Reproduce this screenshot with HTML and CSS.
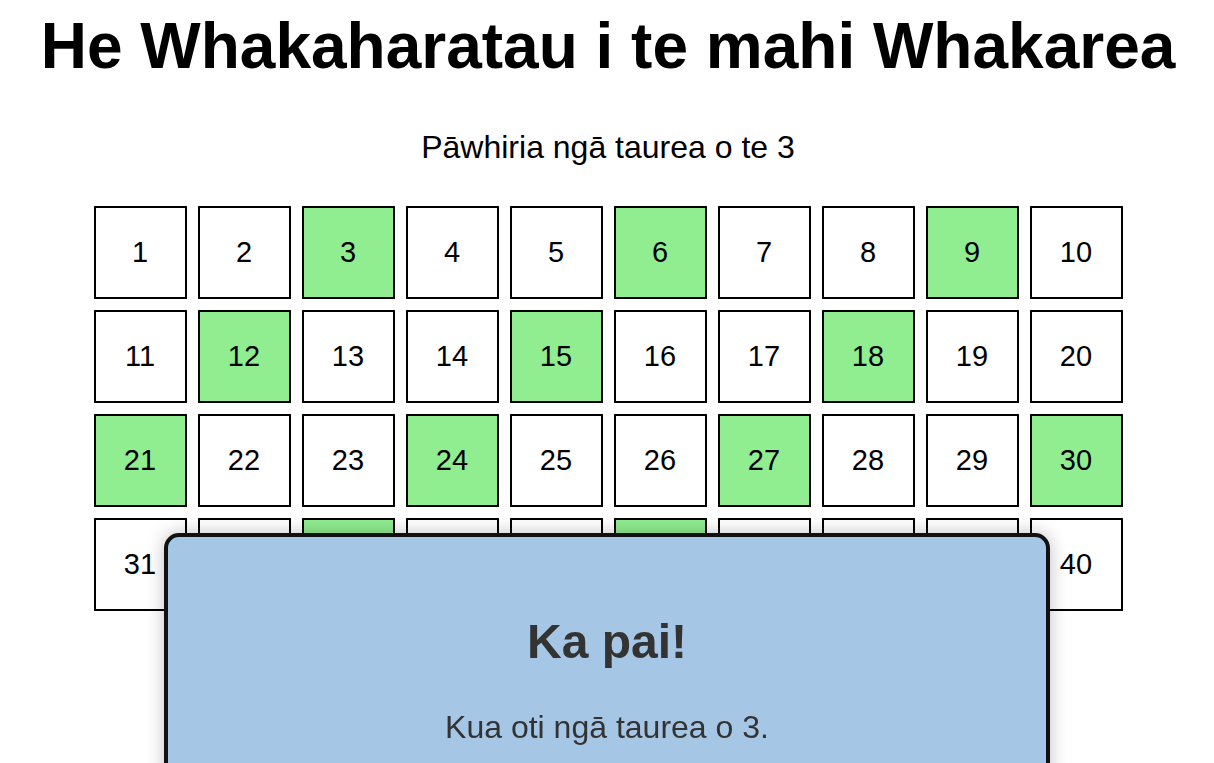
FILE: index.html
```html
<!DOCTYPE html>
<html lang="mi">
<head>
<meta charset="utf-8">
<title>He Whakaharatau i te mahi Whakarea</title>
<link rel="stylesheet" href="styles.css">
</head>
<body>
<main class="page">
  <h1 class="title">He Whakaharatau i te mahi Whakarea</h1>
  <p class="prompt">Pāwhiria ngā taurea o te 3</p>
  <div class="grid">
    <div class="cell">1</div><div class="cell">2</div><div class="cell on">3</div><div class="cell">4</div><div class="cell">5</div><div class="cell on">6</div><div class="cell">7</div><div class="cell">8</div><div class="cell on">9</div><div class="cell">10</div>
    <div class="cell">11</div><div class="cell on">12</div><div class="cell">13</div><div class="cell">14</div><div class="cell on">15</div><div class="cell">16</div><div class="cell">17</div><div class="cell on">18</div><div class="cell">19</div><div class="cell">20</div>
    <div class="cell on">21</div><div class="cell">22</div><div class="cell">23</div><div class="cell on">24</div><div class="cell">25</div><div class="cell">26</div><div class="cell on">27</div><div class="cell">28</div><div class="cell">29</div><div class="cell on">30</div>
    <div class="cell">31</div><div class="cell">32</div><div class="cell on">33</div><div class="cell">34</div><div class="cell">35</div><div class="cell on">36</div><div class="cell">37</div><div class="cell">38</div><div class="cell">39</div><div class="cell">40</div>
  </div>
</main>
<div class="modal">
  <h2 class="modal-title">Ka pai!</h2>
  <p class="modal-text">Kua oti ngā taurea o 3.</p>
</div>
</body>
</html>
```
FILE: styles.css
```css
html, body {
  margin: 0;
  padding: 0;
  background: #ffffff;
  overflow: hidden;
}
body {
  padding: 8px 7px 8px 9px;
  font-family: "Liberation Sans", Arial, sans-serif;
  color: #000;
  height: 763px;
  box-sizing: border-box;
}
.page {
  display: flex;
  flex-direction: column;
  align-items: center;
}
.title {
  margin: 2px 0 0;
  font-size: 64px;
  font-weight: bold;
  line-height: 1.15;
  text-align: center;
}
.prompt {
  margin: 45px 0 0;
  font-size: 32px;
  line-height: 1.15;
  text-align: center;
}
.grid {
  margin-top: 41px;
  display: grid;
  grid-template-columns: repeat(10, 93px);
  grid-auto-rows: 93px;
  gap: 11px;
}
.cell {
  box-sizing: border-box;
  border: 2px solid #000;
  background: #fff;
  display: flex;
  align-items: center;
  justify-content: center;
  font-size: 29px;
}
.cell.on {
  background: #90ee90;
}
.modal {
  position: fixed;
  top: 533px;
  left: 50%;
  transform: translateX(-50%);
  width: 886px;
  height: 400px;
  box-sizing: border-box;
  background: #a6c6e6;
  border: 4px solid #111;
  border-radius: 15px;
  box-shadow: 0 0 18px rgba(0,0,0,0.25);
  text-align: center;
  color: #333;
  padding-top: 77px;
}
.modal-title {
  margin: 0;
  font-size: 48px;
  font-weight: bold;
  line-height: 1.15;
}
.modal-text {
  margin: 40px 0 0;
  font-size: 32px;
  line-height: 1.15;
}
```
